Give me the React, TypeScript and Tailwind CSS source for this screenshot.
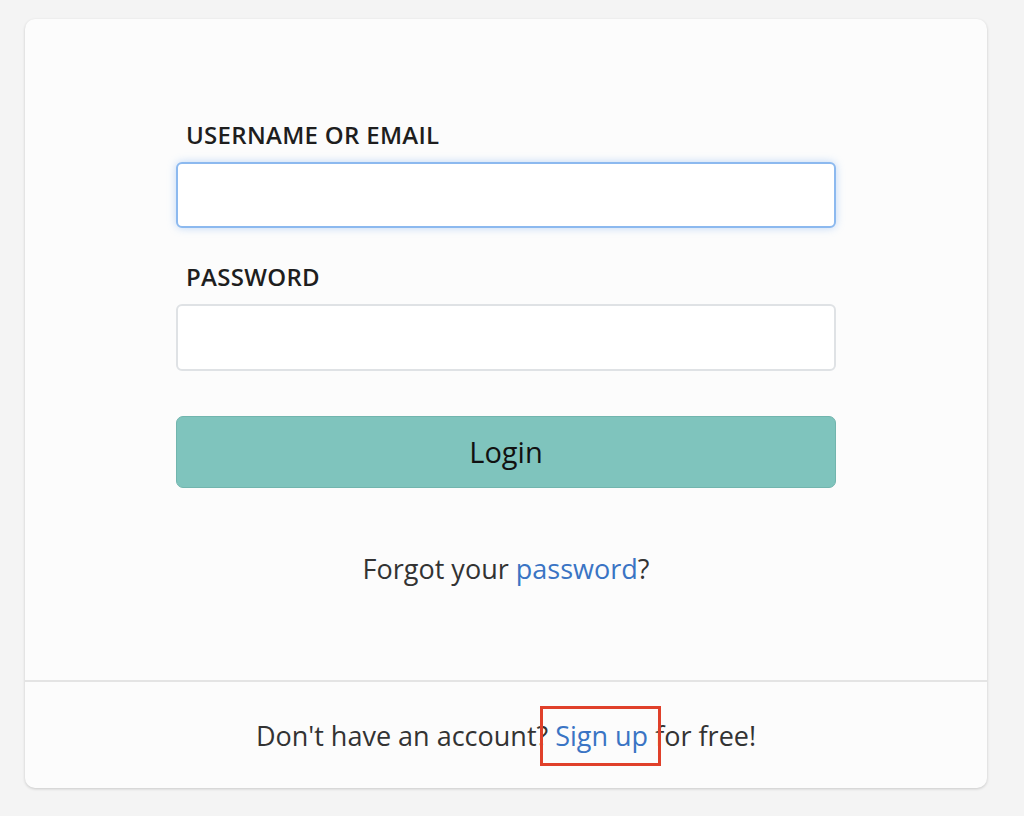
import React from 'react';

const font = { fontFamily: '"Open Sans", "Noto Sans", sans-serif' };

export default function App() {
  return (
    <div className="min-h-[816px] w-[1024px] bg-[#f4f4f4] pt-[19px]" style={font}>
      <div className="relative ml-[25px] w-[962px] rounded-[10px] bg-[#fcfcfc] shadow-[0_1px_3px_rgba(0,0,0,0.18)]">
        <form className="mx-auto flex w-[660px] flex-col pt-[100px] pb-[93px]">
          <label className="pl-[10px] text-[24px] leading-[32px] font-semibold tracking-[0.3px] text-[#1e1e1e]">
            USERNAME OR EMAIL
          </label>
          <input
            type="text"
            className="mt-[11px] h-[66px] w-full rounded-[6px] border-2 border-[#8cb9ef] bg-white shadow-[0_0_9px_rgba(100,160,240,0.4)] outline-none"
          />
          <label className="mt-[33px] pl-[10px] text-[24px] leading-[32px] font-semibold tracking-[0.3px] text-[#1e1e1e]">
            PASSWORD
          </label>
          <input
            type="password"
            className="mt-[11px] h-[67px] w-full rounded-[6px] border-2 border-[#dfe2e5] bg-white outline-none"
          />
          <button
            type="button"
            className="mt-[45px] h-[72px] w-full rounded-[7px] border border-[#72b5ae] bg-[#7fc4bd] text-[29px] font-medium text-[#111]"
          >
            Login
          </button>
          <p className="mt-[63px] text-center text-[27px] leading-[36px] text-[#333]">
            Forgot your <a className="text-[#3a74c4]">password</a>?
          </p>
        </form>
        <div className="flex h-[108px] items-center justify-center border-t-2 border-[#e4e4e4] pt-[2px] text-[27px] text-[#333]">
          <p className="relative">
            Don't have an account?{' '}
            <span className="relative">
              <a className="text-[#3a74c4]">Sign up</a>
              <span className="absolute left-[-15px] top-[-11px] h-[60px] w-[121px] border-[3px] border-[#e0402a]" />
            </span>{' '}
            for free!
          </p>
        </div>
      </div>
    </div>
  );
}
